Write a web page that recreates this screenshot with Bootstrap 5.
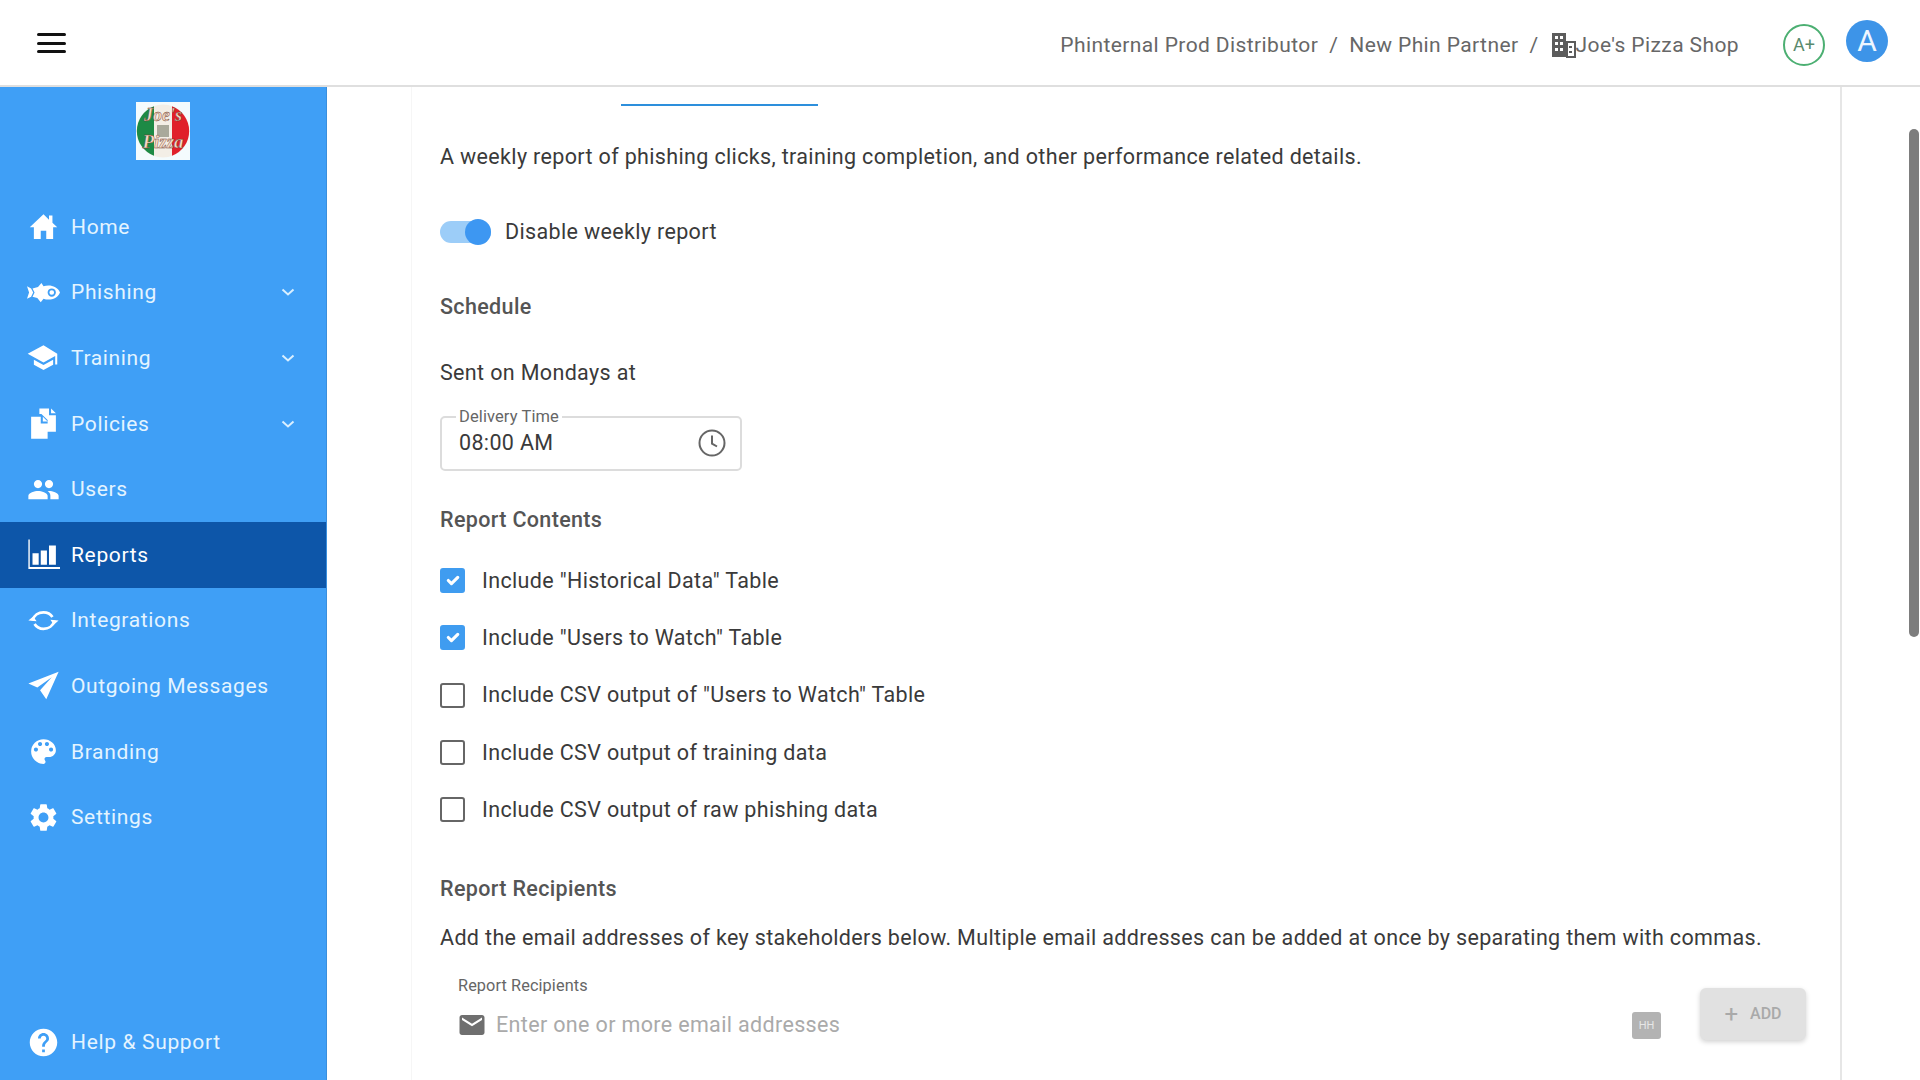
<!DOCTYPE html>
<html lang="en">
<head>
  <meta charset="UTF-8" />
  <title>Weekly Report</title>
  <link href="https://cdn.jsdelivr.net/npm/bootstrap@5.3.3/dist/css/bootstrap.min.css" rel="stylesheet"/>
  <style>
    html, body { height: 100%; overflow: hidden; }
    body { font-family: Roboto, "Liberation Sans", sans-serif; font-size: 21.5px; line-height: 24px; color: #3a3a3a; background: #fff; }
    .top-bar { height: 87px; flex: none; padding: 0 32px 0 37px; background: #fff; border-bottom: 2px solid #dfdfdf; position: relative; z-index: 2; }
    .burger { width: 29px; height: 20px; display: flex; flex-direction: column; justify-content: space-between; margin-top: 1px; }
    .burger span { height: 3px; background: #111; border-radius: 2px; }
    .crumbs { color: #676767; font-size: 21px; letter-spacing: .4px; margin: 4px 44px 0 auto; }
    .crumbs .sep { margin: 0 11px; }
    .grade { width: 42px; height: 42px; border: 2px solid #4caf72; border-radius: 50%; font-size: 18px; color: #5a8a6d; margin: 4px 21px 0 0; }
    .avatar { width: 42px; height: 42px; border-radius: 50%; background: #3d94e8; color: #eef6ff; font-size: 30px; margin-top: -4px; }
    .side-bar { width: 327px; flex: none; background: #3f9ff6; border-right: 1px solid #3a8fdd; }
    .brand-logo { display: block; margin: 15px auto 34px; width: 54px; height: 58px; }
    .side-link { height: 65.6px; padding: 0 28px 0 27px; font-size: 21px; color: #e4f4ff; letter-spacing: .65px; gap: 11px; }
    .side-link:hover { color: #fff; }
    .side-link.is-on { background: #0d56a9; color: #fff; }
    .side-link.is-last { margin-top: auto; margin-bottom: 5px; }
    .side-ico { width: 33px; height: 33px; flex: none; fill: #fff; }
    .side-chev { width: 20px; height: 20px; margin-left: auto; fill: none; stroke: #d9efff; stroke-width: 2; }
    .main-pane { min-width: 0; position: relative; padding: 0 78px 0 84px; }
    .settings-card { height: 100%; padding-left: 28px; padding-right: 34px; border-left: 1px solid #f6f6f6; border-right: 2px solid #e6e6e6; overflow: hidden; letter-spacing: .35px; }
    .tab-strip { height: 19px; padding-top: 17px; }
    .tab-mark { width: 197px; height: 2px; background: #2d8fdc; margin-left: 181px; }
    .intro { margin-top: 39px; }
    .switch-row { margin-top: 48px; height: 30px; gap: 14px; }
    .switch-track { width: 51px; height: 22px; border-radius: 11px; background: #9ccdf8; position: relative; }
    .switch-track::after { content: ""; position: absolute; right: 0; top: -2px; width: 26px; height: 26px; border-radius: 50%; background: #3d97f2; }
    .sec-title { font-weight: 500; color: #555; }
    .time-field { width: 302px; height: 64px; margin-top: 22px; padding: 1px 13px 0 17px; border: 2px solid #dcdcdc; border-radius: 5px; }
    .time-field legend { float: none; width: auto; margin: 0 0 0 -3px; padding: 0 3px; font-size: 16.500px; line-height: 20px; color: #666; letter-spacing: .1px; }
    .clock { width: 30px; height: 30px; fill: none; stroke: #666; stroke-width: 1.6; }
    .check-row { height: 57.3px; gap: 17px; }
    .check-row .form-check-input { width: 25px; height: 25px; margin: 0; border: 2px solid #666; border-radius: 3px; flex: none; }
    .check-row .form-check-input:checked { background-color: #3f9cf0; border-color: #3f9cf0; }
    .field-label { font-size: 16.3px; line-height: 20px; color: #666; padding-left: 18px; letter-spacing: .1px; }
    .mail-row { height: 30px; margin-top: 14px; padding-left: 17px; gap: 9px; color: #aaa; }
    .mail-ico { width: 30px; height: 30px; fill: #6f6f6f; flex: none; }
    .grid-chip { width: 29px; height: 27px; margin-left: auto; border-radius: 3px; background: #b3b3b3; color: #e6e6e6; font-size: 11px; line-height: 27px; text-align: center; letter-spacing: 0; }
    .add-btn { width: 106px; height: 52px; margin: 12px 0 0 39px; border: 0; border-radius: 6px; background: #e1e1e1; color: #a9a9a9; font-size: 16px; font-weight: 500; box-shadow: 0 2px 5px rgba(0,0,0,.18); gap: 12px; }
    .fake-scroll { position: absolute; right: 1px; top: 42px; width: 10px; height: 508px; border-radius: 5px; background: #7d7d7d; }
  </style>
</head>
<body class="d-flex flex-column">
  <header class="top-bar d-flex align-items-center">
    <div class="burger"><span></span><span></span><span></span></div>
    <div class="crumbs d-flex align-items-center">
      <span>Phinternal Prod Distributor</span><span class="sep">/</span>
      <span>New Phin Partner</span><span class="sep">/</span>
      <svg width="26" height="28" viewBox="0 0 26 28" fill="#5c5c5c"><path d="M2 2h14v24H2z"/><path d="M17 11h8v15h-8z" fill="none" stroke="#5c5c5c" stroke-width="2"/><g fill="#fff"><rect x="5" y="5" width="3" height="3"/><rect x="10" y="5" width="3" height="3"/><rect x="5" y="11" width="3" height="3"/><rect x="10" y="11" width="3" height="3"/><rect x="5" y="17" width="3" height="3"/><rect x="10" y="17" width="3" height="3"/></g><rect x="19" y="15" width="3" height="2"/><rect x="19" y="20" width="3" height="2"/></svg>
      <span>Joe's Pizza Shop</span>
    </div>
    <div class="grade d-flex align-items-center justify-content-center">A+</div>
    <div class="avatar d-flex align-items-center justify-content-center">A</div>
  </header>

  <div class="d-flex flex-grow-1" style="min-height:0">
    <aside class="side-bar d-flex flex-column">
      <svg class="brand-logo" viewBox="0 0 54 58">
        <rect width="54" height="58" fill="#f4fbfd"/>
        <circle cx="27" cy="29" r="26.5" fill="#f3eee6"/>
        <path d="M18 4.2A26.5 26.5 0 0 0 18 53.8z" fill="#1d8a45"/>
        <path d="M36 4.2A26.5 26.5 0 0 1 36 53.8z" fill="#e0202a"/>
        <rect x="21" y="23" width="12" height="12" fill="#a9a99b"/>
        <text x="27" y="19" text-anchor="middle" font-family="Liberation Serif, serif" font-style="italic" font-weight="700" font-size="18" fill="#f6dcc8" stroke="#6b3326" stroke-width=".4">Joe's</text>
        <text x="27" y="46" text-anchor="middle" font-family="Liberation Serif, serif" font-style="italic" font-weight="700" font-size="19" fill="#f6dcc8" stroke="#6b3326" stroke-width=".4">Pizza</text>
      </svg>
      <nav class="nav flex-column flex-grow-1">
        <a class="nav-link side-link d-flex align-items-center" href="#"><svg class="side-ico" viewBox="0 0 24 24"><path d="M10 21v-6h4v6h5v-8.500h3L18.500 9.300V4h-2.500v3L12 3 2 12.500h3V21z"/></svg>Home</a>
        <a class="nav-link side-link d-flex align-items-center" href="#"><svg class="side-ico" viewBox="0 0 24 24"><path fill-rule="evenodd" d="M0 7.500l3 1.500 1.500 3L3 15l-3 1.500L1.500 12zM4 9l4-1 2.500-3 1.500 2.500c4-1.500 10-.5 12 4.500-2 5-8 6-12 4.500L10 19l-2.500-3-3.500-1 1.500-3zM18 9a3 3 0 1 0 0 6 3 3 0 0 0 0-6zm0 1.300a1.700 1.700 0 1 1 0 3.400 1.700 1.700 0 0 1 0-3.400z"/></svg>Phishing<svg class="side-chev" viewBox="0 0 20 20"><path d="M4.500 7.500l5.500 5 5.500-5"/></svg></a>
        <a class="nav-link side-link d-flex align-items-center" href="#"><svg class="side-ico" viewBox="0 0 24 24"><path d="M5 13.700v3.500L12 21l7-3.800v-3.500L12 17.500zM12 3L.5 9.300 12 15.600l8.500-4.700V17H22V9.300z"/></svg>Training<svg class="side-chev" viewBox="0 0 20 20"><path d="M4.500 7.500l5.500 5 5.500-5"/></svg></a>
        <a class="nav-link side-link d-flex align-items-center" href="#"><svg class="side-ico" viewBox="0 0 24 24"><path d="M9 1h7v5h5v12h-6V9.500L10.500 5H9zM17.500 1l3.500 3.500h-3.500zM3 7h7v5h5v11H3zM11.500 7l3.500 3.500h-3.500z"/></svg>Policies<svg class="side-chev" viewBox="0 0 20 20"><path d="M4.500 7.500l5.500 5 5.500-5"/></svg></a>
        <a class="nav-link side-link d-flex align-items-center" href="#"><svg class="side-ico" viewBox="0 0 24 24"><path d="M16 11c1.660 0 2.990-1.340 2.990-3S17.660 5 16 5c-1.660 0-3 1.340-3 3s1.340 3 3 3zm-8 0c1.660 0 2.990-1.340 2.990-3S9.660 5 8 5C6.340 5 5 6.340 5 8s1.340 3 3 3zm0 2c-2.330 0-7 1.170-7 3.500V19h14v-2.500c0-2.330-4.670-3.500-7-3.500zm8 0c-.29 0-.62.02-.97.05 1.160.84 1.970 1.970 1.970 3.450V19h6v-2.500c0-2.330-4.670-3.500-7-3.500z"/></svg>Users</a>
        <a class="nav-link side-link is-on d-flex align-items-center" href="#"><svg class="side-ico" viewBox="0 0 24 24"><path d="M1 1h1v20h22v1.500H1z"/><path d="M4 11h4.500v8.500H4zM10 9h4.500v10.500H10zM16 5.500h5v14h-5z"/></svg>Reports</a>
        <a class="nav-link side-link d-flex align-items-center" href="#"><svg class="side-ico" viewBox="0 0 24 24"><path d="M4 12c1-4 4.500-6 8-6 2.500 0 5 1 6.500 3.500M20 12c-1 4-4.500 6-8 6-2.500 0-5-1-6.500-3.500" fill="none" stroke="#fff" stroke-width="2"/><path d="M1 12l3.500-3L7 12.500zM23 12l-3.500 3L17 11.500z"/></svg>Integrations</a>
        <a class="nav-link side-link d-flex align-items-center" href="#"><svg class="side-ico" viewBox="0 0 24 24"><path d="M23 2L1 10.500l6.500 3L18 6l-8.500 9.500L14 22z"/></svg>Outgoing Messages</a>
        <a class="nav-link side-link d-flex align-items-center" href="#"><svg class="side-ico" viewBox="0 0 24 24"><path d="M12 3a9 9 0 0 0 0 18c.83 0 1.500-.67 1.500-1.500 0-.39-.15-.74-.39-1.010-.23-.26-.38-.61-.38-.99 0-.83.67-1.500 1.500-1.500H16c2.760 0 5-2.240 5-5 0-4.420-4.030-8-9-8zm-5.500 9c-.83 0-1.500-.67-1.500-1.500S5.670 9 6.500 9 8 9.670 8 10.500 7.330 12 6.500 12zm3-4C8.670 8 8 7.330 8 6.500S8.670 5 9.500 5s1.500.67 1.500 1.500S10.330 8 9.500 8zm5 0c-.83 0-1.500-.67-1.500-1.500S13.670 5 14.500 5s1.500.67 1.500 1.500S15.330 8 14.500 8zm3 4c-.83 0-1.500-.67-1.500-1.500S16.670 9 17.500 9s1.500.67 1.500 1.500-.67 1.500-1.500 1.500z"/></svg>Branding</a>
        <a class="nav-link side-link d-flex align-items-center" href="#"><svg class="side-ico" viewBox="0 0 24 24"><path d="M19.140 12.940c.04-.3.06-.61.06-.94 0-.32-.02-.64-.07-.94l2.030-1.580c.18-.14.23-.41.12-.61l-1.920-3.320c-.12-.22-.37-.29-.59-.22l-2.390.96c-.5-.38-1.030-.7-1.620-.94l-.36-2.540c-.04-.24-.24-.41-.48-.41h-3.840c-.24 0-.43.17-.47.41l-.36 2.540c-.59.24-1.130.57-1.620.94l-2.390-.96c-.22-.08-.47 0-.59.22L2.740 8.870c-.12.21-.08.47.12.61l2.030 1.580c-.05.3-.09.63-.09.94s.02.64.07.94l-2.030 1.580c-.18.14-.23.41-.12.61l1.920 3.320c.12.22.37.29.59.22l2.390-.96c.5.38 1.030.7 1.620.94l.36 2.540c.05.24.24.41.48.41h3.840c.24 0 .44-.17.47-.41l.36-2.540c.59-.24 1.130-.56 1.620-.94l2.390.96c.22.08.47 0 .59-.22l1.920-3.320c.12-.22.07-.47-.12-.61l-2.010-1.580zM12 15.600c-1.980 0-3.600-1.620-3.600-3.600s1.620-3.600 3.600-3.600 3.600 1.620 3.600 3.600-1.620 3.600-3.600 3.600z"/></svg>Settings</a>
        <a class="nav-link side-link is-last d-flex align-items-center" href="#"><svg class="side-ico" viewBox="0 0 24 24"><path d="M12 2C6.480 2 2 6.480 2 12s4.480 10 10 10 10-4.480 10-10S17.520 2 12 2zm1 17h-2v-2h2v2zm2.070-7.750l-.9.92C13.450 12.900 13 13.500 13 15h-2v-.5c0-1.100.45-2.100 1.170-2.830l1.240-1.260c.37-.36.59-.86.59-1.410 0-1.100-.9-2-2-2s-2 .9-2 2H8c0-2.210 1.790-4 4-4s4 1.790 4 4c0 .88-.36 1.680-.93 2.250z"/></svg>Help &amp; Support</a>
      </nav>
    </aside>

    <main class="main-pane flex-grow-1">
      <div class="settings-card">
        <div class="tab-strip"><div class="tab-mark"></div></div>
        <p class="intro mb-0">A weekly report of phishing clicks, training completion, and other performance related details.</p>

        <div class="switch-row d-flex align-items-center">
          <span class="switch-track"></span>
          <span>Disable weekly report</span>
        </div>

        <div class="sec-title" style="margin-top:48px">Schedule</div>
        <div style="margin-top:42px">Sent on Mondays at</div>

        <fieldset class="time-field">
          <legend>Delivery Time</legend>
          <div class="d-flex align-items-center justify-content-between">
            <span>08:00 AM</span>
            <svg class="clock" viewBox="0 0 24 24"><circle cx="12" cy="12" r="10"/><path d="M12 6v6.500l4 2.300"/></svg>
          </div>
        </fieldset>

        <div class="sec-title" style="margin-top:37px">Report Contents</div>
        <div style="margin-top:20px">
          <label class="check-row d-flex align-items-center"><input class="form-check-input" type="checkbox" checked><span>Include "Historical Data" Table</span></label>
          <label class="check-row d-flex align-items-center"><input class="form-check-input" type="checkbox" checked><span>Include "Users to Watch" Table</span></label>
          <label class="check-row d-flex align-items-center"><input class="form-check-input" type="checkbox"><span>Include CSV output of "Users to Watch" Table</span></label>
          <label class="check-row d-flex align-items-center"><input class="form-check-input" type="checkbox"><span>Include CSV output of training data</span></label>
          <label class="check-row d-flex align-items-center"><input class="form-check-input" type="checkbox"><span>Include CSV output of raw phishing data</span></label>
        </div>

        <div class="sec-title" style="margin-top:39px">Report Recipients</div>
        <div style="margin-top:25px">Add the email addresses of key stakeholders below. Multiple email addresses can be added at once by separating them with commas.</div>

        <div class="d-flex" style="margin-top:26px">
          <div class="flex-grow-1">
            <div class="field-label">Report Recipients</div>
            <div class="mail-row d-flex align-items-center">
              <svg class="mail-ico" viewBox="0 0 24 24"><path d="M20 4H4c-1.100 0-1.990.9-1.990 2L2 18c0 1.100.9 2 2 2h16c1.100 0 2-.9 2-2V6c0-1.100-.9-2-2-2zm0 4l-8 5-8-5V6l8 5 8-5v2z"/></svg>
              <span>Enter one or more email addresses</span>
              <span class="grid-chip">HH</span>
            </div>
          </div>
          <button class="add-btn d-flex align-items-center justify-content-center" type="button"><span style="font-size:24px;font-weight:400">+</span>ADD</button>
        </div>
      </div>
      <div class="fake-scroll"></div>
    </main>
  </div>
</body>
</html>
